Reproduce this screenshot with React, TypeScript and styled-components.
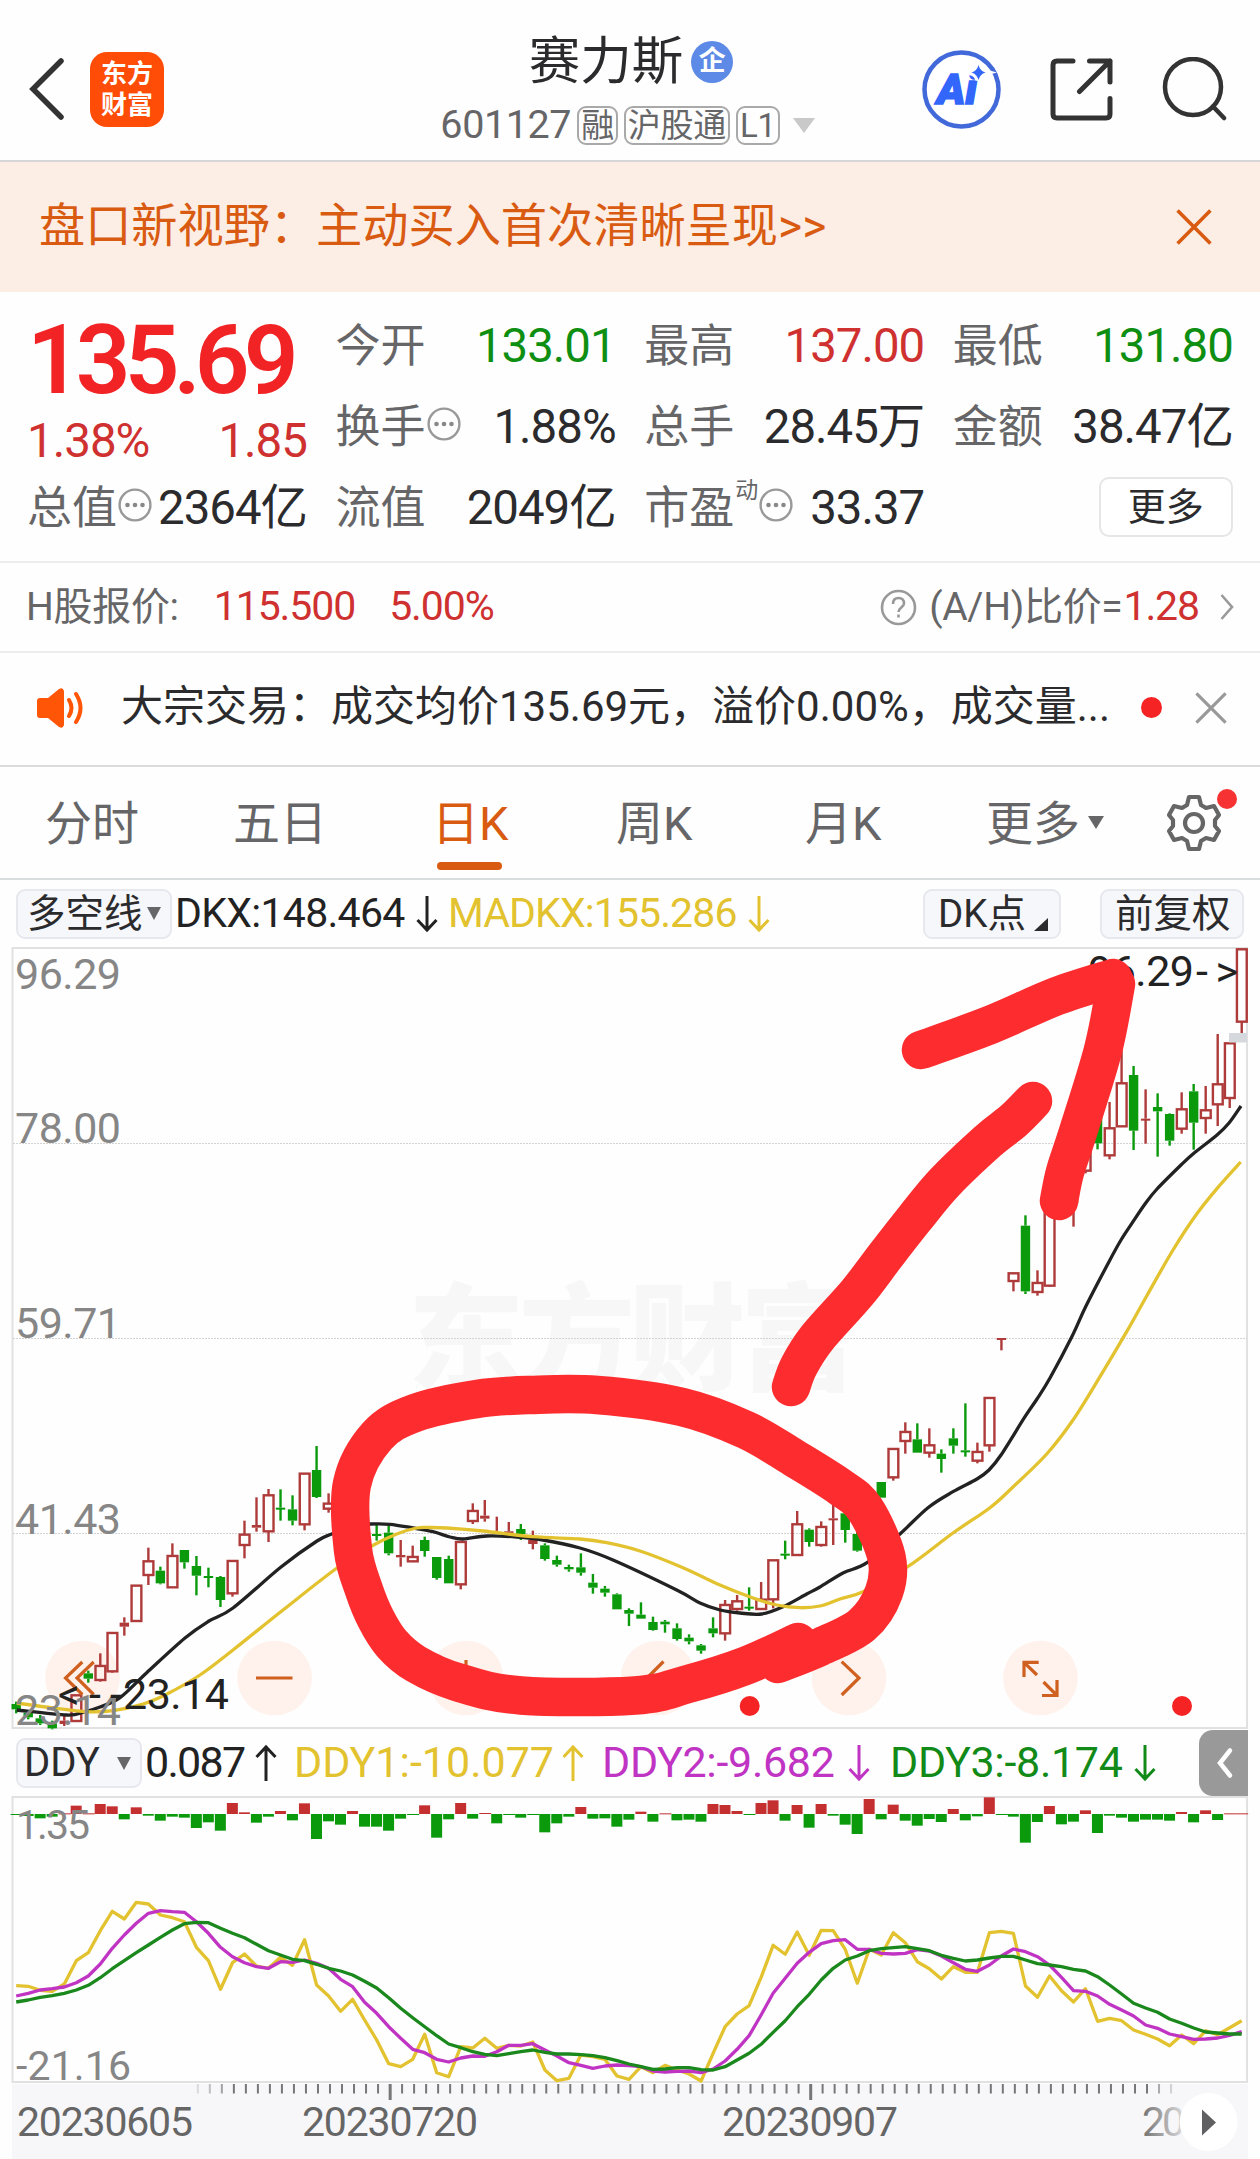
import React from "react";
import styled, { createGlobalStyle } from "styled-components";

const RED = "#cf3030";
const GREEN = "#0f8f12";
const YELLOW = "#e3c22f";
const MAGENTA = "#c034c4";
const ORANGE = "#d95b12";
const INK = "#2b2b2d";
const GREY = "#666668";
const FONT = `Roboto, "Noto Sans CJK SC", sans-serif`;

const Global = createGlobalStyle`
  * { box-sizing: border-box; }
  body { margin: 0; background: #fefefe; }
  svg { display: block; flex: none; }
`;

const Page = styled.main`
  width: 1260px;
  height: 2159px;
  overflow: hidden;
  background: #fefefe;
  color: ${INK};
  font-family: ${FONT};
  line-height: 1.2;
  white-space: nowrap;
`;

/* ---------- header ---------- */
const Header = styled.header`
  height: 162px;
  display: grid;
  grid-template-columns: 330px 1fr 330px;
  border-bottom: 2px solid #d6d6d6;
`;
const HeaderSide = styled.div<{ $end?: boolean }>`
  display: flex;
  align-items: center;
  justify-content: ${(p) => (p.$end ? "flex-end" : "flex-start")};
  gap: ${(p) => (p.$end ? 49 : 24)}px;
  padding: ${(p) => (p.$end ? "18px 33px 0 0" : "18px 0 0 29px")};
`;
const Logo = styled.div`
  width: 74px;
  height: 75px;
  border-radius: 17px;
  background: #ff4c06;
  color: #fff;
  font: 700 26px/31px ${FONT};
  text-align: center;
  padding-top: 7px;
`;
const HeaderTitle = styled.div`
  display: flex;
  flex-direction: column;
  align-items: center;
  padding-top: 32px;
  gap: 13px;
`;
const Name = styled.h1`
  margin: 0;
  display: flex;
  align-items: center;
  gap: 8px;
  font-size: 51.5px;
  font-weight: 400;
  line-height: 60px;
  padding-left: 2px;
`;
const Badge = styled.span`
  width: 42px;
  height: 42px;
  border-radius: 50%;
  background: #5c8ae6;
  color: #fff;
  font-size: 27px;
  font-weight: 700;
  line-height: 41px;
  text-align: center;
`;
const Code = styled.div`
  display: flex;
  align-items: center;
  height: 40px;
  font-size: 39.5px;
  letter-spacing: -0.4px;
  color: ${GREY};
  gap: 6px;
  margin-left: -5px;
`;
const Tag = styled.span`
  height: 39px;
  border: 2px solid #a9a9a9;
  border-radius: 9px;
  padding: 0 2px;
  font-size: 33px;
  line-height: 35px;
  letter-spacing: -0.3px;
`;

/* ---------- banner ---------- */
const Banner = styled.section`
  height: 130px;
  background: #fceee5;
  color: ${ORANGE};
  display: flex;
  align-items: center;
  justify-content: space-between;
  padding: 0 48px 0 39px;
  font-size: 46.2px;
`;

/* ---------- quote ---------- */
const Quote = styled.section`
  height: 271px;
  display: flex;
  gap: 28.6px;
  padding: 14px 26px 0 27px;
  border-bottom: 2px solid #ededed;
`;
const QuoteCol = styled.div`
  width: 280px;
  flex: none;
`;
const Price = styled.div`
  height: 108px;
  line-height: 108px;
  font-size: 96px;
  font-weight: 600;
  letter-spacing: -6px;
  color: #f22325;
`;
const Change = styled.div`
  height: 54px;
  display: flex;
  align-items: center;
  justify-content: space-between;
  font-size: 47.5px;
  letter-spacing: -1px;
  color: ${RED};
`;
const Cell = styled.div`
  height: 81px;
  display: flex;
  align-items: center;
`;
const Label = styled.span`
  font-size: 45px;
  color: ${GREY};
  margin-right: 1px;
`;
const Sup = styled.sup`
  font-size: 23px;
  line-height: 24px;
  align-self: flex-start;
  margin: 11px 1px 0 0;
  color: ${GREY};
`;
const Value = styled.span<{ $color?: string }>`
  margin-left: auto;
  font-size: 47.4px;
  letter-spacing: -1px;
  color: ${(p) => p.$color ?? INK};
`;
const MoreButton = styled.button`
  margin: -4px 0 0 auto;
  width: 134px;
  height: 60px;
  border: 2px solid #e6e6e8;
  border-radius: 10px;
  background: #fff;
  color: ${INK};
  font: 400 38px/54px ${FONT};
  padding: 0;
`;

/* ---------- H share and notice ---------- */
const HShare = styled.section`
  height: 90px;
  display: flex;
  align-items: center;
  padding: 0 26px 0 26px;
  border-bottom: 2px solid #ededed;
  font-size: 39px;
  letter-spacing: -0.3px;
  color: ${GREY};
`;
const Figure = styled.span<{ $left: number }>`
  margin-left: ${(p) => p.$left}px;
  font-size: 41px;
  letter-spacing: -1.1px;
  color: ${RED};
`;
const Ratio = styled.div`
  display: flex;
  align-items: center;
  margin-left: auto;
`;
const Notice = styled.section`
  height: 114px;
  display: flex;
  align-items: center;
  padding: 0 33px 3px 35px;
  border-bottom: 2px solid #dadcdc;
  font-size: 42px;
`;
const NoticeText = styled.span`
  margin-left: 35px;
`;
const Dot = styled.i`
  width: 21px;
  height: 21px;
  border-radius: 50%;
  background: #f52324;
  margin: 0 33px 0 auto;
`;

/* ---------- tabs ---------- */
const Tabs = styled.nav`
  height: 113px;
  display: flex;
  border-bottom: 2px solid #d8dcdc;
  padding-left: 45px;
  font-size: 47px;
  line-height: 114px;
  color: ${GREY};
`;
const Tab = styled.div<{ $width: number; $on?: boolean }>`
  width: ${(p) => p.$width}px;
  height: 111px;
  flex: none;
  display: flex;
  position: relative;
  color: ${(p) => (p.$on ? ORANGE : "inherit")};
`;
const Underline = styled.i`
  position: absolute;
  left: 5px;
  bottom: 8px;
  width: 65px;
  height: 8px;
  border-radius: 4px;
  background: ${ORANGE};
`;
const Caret = styled.i<{ $w: number; $h: number; $color: string }>`
  border-left: ${(p) => p.$w / 2}px solid transparent;
  border-right: ${(p) => p.$w / 2}px solid transparent;
  border-top: ${(p) => p.$h}px solid ${(p) => p.$color};
  align-self: center;
`;
const GearBox = styled.div`
  position: relative;
  height: 112px;
  display: flex;
  align-items: center;
`;
const GearDot = styled.i`
  position: absolute;
  top: 22px;
  right: -14px;
  width: 20px;
  height: 20px;
  border-radius: 50%;
  background: #f63332;
`;

/* ---------- indicator bars ---------- */
const IndicatorBar = styled.div<{ $height: number }>`
  height: ${(p) => p.$height}px;
  display: flex;
  align-items: center;
  padding: 0 16px;
  font-size: 41px;
`;
const Chip = styled.button<{ $width: number; $left?: string; $pad?: number }>`
  width: ${(p) => p.$width}px;
  height: 50px;
  flex: none;
  margin-left: ${(p) => p.$left ?? "0"};
  border: 2px solid #e6e8ee;
  border-radius: 9px;
  background: #f6f7fa;
  color: ${INK};
  font: 400 38.5px/44px ${FONT};
  padding: 0 0 0 ${(p) => p.$pad ?? 9}px;
  display: flex;
  align-items: center;
  gap: 4px;
`;
const ChipCorner = styled.i`
  border-left: 14px solid transparent;
  border-bottom: 13px solid ${INK};
  align-self: flex-end;
  margin: 0 0 6px 4px;
`;
const Reading = styled.span<{ $color: string; $width: number; $left: number; $track?: number; $size?: number }>`
  width: ${(p) => p.$width}px;
  flex: none;
  margin-left: ${(p) => p.$left}px;
  color: ${(p) => p.$color};
  font-size: ${(p) => p.$size ?? 41}px;
  letter-spacing: ${(p) => p.$track ?? -0.8}px;
  display: flex;
  align-items: center;
  justify-content: space-between;
`;
const SideHandle = styled.button`
  margin-left: auto;
  width: 49px;
  height: 66px;
  border: 0;
  border-radius: 14px 0 0 14px;
  background: #999;
  padding: 0 0 0 17px;
`;
const ChartSvg = styled.svg`
  font-family: ${FONT};
`;

/* ---------- chart data ---------- */
const X0 = 16.2;
const STEP = 12.015;
const xAt = (i: number) => X0 + STEP * i;

// [index, up, high, top, bottom, low], prices as thirds of a pixel below `base`
type Candle = [number, 0 | 1, number, number, number, number];
const groups: { base: number; rows: Candle[] }[] = [
  {
    base: 1400,
    rows: [
      [0, 0, 905, 912, 928, 940], [1, 0, 930, 938, 952, 958], [2, 0, 945, 955, 970, 975], [3, 0, 962, 970, 985, 988],
      [4, 1, 945, 962, 972, 978], [5, 1, 885, 885, 963, 963], [6, 0, 812, 820, 836, 848], [7, 1, 760, 797, 840, 845],
      [8, 1, 698, 698, 814, 818], [9, 1, 652, 668, 680, 707], [10, 1, 556, 556, 663, 663], [11, 1, 443, 483, 525, 555],
      [12, 0, 500, 512, 550, 553], [13, 1, 430, 467, 562, 562], [14, 0, 450, 450, 487, 506], [15, 0, 468, 498, 527, 586],
      [16, 0, 503, 528, 533, 562], [17, 0, 528, 531, 600, 621], [18, 1, 482, 482, 580, 590], [19, 1, 362, 403, 435, 475],
      [20, 1, 292, 375, 383, 395], [21, 1, 267, 285, 394, 426], [22, 0, 268, 323, 327, 362], [23, 0, 286, 328, 362, 376],
      [24, 1, 220, 220, 373, 391], [25, 0, 138, 210, 291, 294], [26, 1, 280, 310, 326, 338], [30, 0, 370, 402, 408, 422],
      [31, 0, 370, 398, 460, 466], [32, 1, 420, 465, 472, 500], [33, 1, 437, 470, 484, 484],
    ],
  },
  {
    base: 1440,
    rows: [
      [34, 0, 290, 300, 333, 350], [35, 0, 351, 351, 414, 419], [36, 0, 347, 357, 430, 430], [37, 1, 305, 305, 433, 448],
      [38, 1, 190, 212, 243, 252], [39, 1, 180, 227, 236, 245], [40, 1, 230, 276, 280, 282], [41, 1, 246, 274, 280, 282],
      [42, 0, 252, 267, 282, 300], [43, 1, 272, 300, 312, 328], [44, 0, 310, 316, 357, 362], [45, 0, 347, 360, 374, 380],
      [46, 0, 374, 381, 388, 395], [47, 0, 340, 382, 398, 407], [48, 0, 402, 428, 443, 461], [49, 0, 438, 446, 458, 470],
      [50, 0, 460, 463, 508, 508], [51, 0, 505, 510, 521, 558], [52, 0, 487, 524, 536, 536], [53, 0, 530, 546, 570, 572],
      [54, 0, 540, 545, 553, 578], [55, 0, 550, 565, 597, 602], [56, 0, 583, 593, 604, 613], [57, 0, 612, 616, 632, 641],
      [58, 0, 532, 565, 580, 592], [59, 1, 480, 494, 580, 602], [60, 1, 465, 483, 507, 512], [61, 0, 442, 500, 504, 512],
      [62, 1, 426, 478, 507, 507], [63, 1, 360, 360, 478, 505], [64, 0, 302, 341, 345, 358], [65, 1, 213, 252, 345, 345],
      [66, 0, 265, 269, 306, 320], [67, 1, 244, 260, 315, 320], [68, 1, 195, 235, 239, 315],
    ],
  },
  {
    base: 1280,
    rows: [
      [69, 0, 690, 700, 750, 788], [70, 0, 750, 762, 812, 815], [72, 0, 606, 606, 653, 653], [73, 1, 506, 506, 592, 602],
      [74, 1, 427, 455, 483, 521], [75, 0, 430, 478, 518, 518], [76, 1, 445, 495, 518, 533], [77, 0, 508, 521, 537, 578],
      [78, 0, 445, 475, 497, 521], [79, 0, 370, 511, 516, 530], [80, 1, 488, 515, 542, 550], [81, 1, 353, 353, 496, 515],
      [82, 1, 174, 174, 178, 211],
    ],
  },
  {
    base: 940,
    rows: [
      [83, 1, 999, 999, 1023, 1054], [84, 0, 826, 857, 1054, 1062], [85, 1, 991, 1028, 1056, 1067], [86, 1, 780, 780, 1037, 1040],
      [88, 1, 780, 780, 790, 860], [89, 1, 600, 600, 692, 700], [90, 0, 480, 500, 610, 628], [91, 1, 486, 564, 646, 658],
      [92, 1, 300, 429, 559, 559], [93, 0, 378, 405, 572, 630], [94, 1, 448, 536, 540, 611], [95, 0, 460, 501, 514, 650],
      [96, 0, 520, 522, 602, 617], [97, 1, 457, 507, 566, 581], [98, 0, 432, 454, 548, 629], [99, 1, 438, 510, 534, 581],
      [100, 1, 282, 432, 493, 558], [101, 1, 309, 309, 474, 504], [102, 1, 27, 27, 245, 280],
    ],
  },
];

const dkx: number[][] = [
  [16.7, 1710], [66.7, 1715], [84, 1712], [100, 1707], [120, 1697.7], [146.7, 1672.7], [185, 1638], [209, 1621], [233, 1608],
  [281, 1567], [317, 1541], [331.7, 1534], [352, 1526], [370.7, 1524], [390, 1524.3], [413, 1528], [433, 1531.7], [450, 1537],
  [463, 1539], [486.7, 1536], [516.7, 1537], [543, 1540], [580, 1548], [613, 1560], [676.7, 1590], [700, 1603], [720, 1610],
  [740, 1613], [761.7, 1614], [783, 1606.7], [806.7, 1594], [820, 1587], [843, 1573], [867, 1562.7], [900, 1534],
  [928, 1507.7], [953, 1491.7], [977, 1479], [989, 1470], [1001, 1455], [1025, 1416.7], [1037, 1399], [1050, 1378],
  [1071.7, 1337], [1086, 1306], [1109, 1261.7], [1121, 1240], [1133, 1221.7], [1145, 1204], [1157, 1189], [1181, 1165],
  [1193, 1154], [1217, 1135], [1229, 1123], [1241, 1106],
];
const madkx: number[][] = [
  [16.7, 1703], [53, 1708], [87, 1711.7], [113, 1710.7], [143, 1704], [167, 1694], [200, 1675], [233, 1650], [283, 1610],
  [337, 1568], [371.7, 1546], [396.7, 1534], [416.7, 1528], [430, 1527.5], [446.7, 1528], [483, 1531], [533, 1536.7], [580, 1539],
  [606.7, 1542.7], [640, 1551], [683, 1567.7], [720, 1585], [753, 1598], [776.7, 1605], [800, 1607.7], [820, 1606],
  [840, 1599], [863, 1591.7], [907.7, 1566.7], [953, 1533], [990, 1507.7], [1013, 1487], [1046.7, 1454], [1073, 1420],
  [1100, 1376.7], [1126.7, 1331.7], [1146.7, 1296], [1173, 1250], [1196.7, 1214], [1220, 1185], [1240.7, 1162],
];

const bars = [
  -1, -6, -13, -8, 2, 25, 2, 30, 23, -16, 20, -5, -20, -8, -11, -42, -25, -50, 33, 5, -26, -8, 9, -19, 32, -75, -22, -32, 9,
  -38, -38, -50, -14, -2, 26, -71, -16, 33, -14, 3, -28, -2, -11, -2, -55, -28, -8, 21, -14, -13, -38, -17, 7, -23, 2, -19,
  -17, -23, 30, 27, 9, -1, 33, 41, -20, 27, -41, 30, -5, -32, -60, 45, -16, 28, -20, -35, -15, -24, 15, -19, -7, 50, -2, -8,
  -86, -24, 24, -31, -23, 11, -57, -5, -11, -23, -17, -17, -20, 6, -25, 11, -18, 2, 2,
];
const ddy1 = [
  797, 799, 811, 814, 792, 722, 698, 632, 574, 597, 547, 552, 585, 593, 605, 682, 722, 808, 728, 702, 738, 745, 712, 736, 659,
  795, 828, 874, 838, 900, 960, 1031, 1040, 1018, 943, 1058, 1070, 980, 984, 955, 985, 976, 978, 966, 1050, 1082, 1075, 1005,
  1010, 1018, 1068, 1078, 1040, 1058, 1036, 1050, 1062, 1083, 1000, 920, 882, 857, 772, 676, 703, 636, 706, 631, 632, 688,
  790, 688, 705, 638, 668, 725, 746, 777, 740, 757, 757, 638, 634, 640, 798, 832, 768, 812, 846, 806, 904, 895, 902, 930, 943,
  957, 977, 945, 971, 932, 944, 923, 902,
];
const ddy2 = [
  828, 820, 810, 806, 801, 788, 768, 732, 685, 645, 610, 580, 572, 575, 577, 605, 640, 682, 710, 728, 740, 745, 725, 727, 720,
  730, 745, 778, 800, 847, 880, 920, 955, 988, 998, 1018, 1026, 1014, 1008, 1009, 995, 976, 976, 971, 990, 1008, 1028, 1036,
  1045, 1038, 1035, 1037, 1040, 1053, 1056, 1054, 1053, 1058, 1047, 1023, 988, 947, 885, 820, 775, 730, 697, 671, 662, 659,
  688, 688, 700, 702, 700, 689, 693, 708, 728, 748, 754, 735, 708, 687, 695, 710, 735, 772, 812, 814, 828, 853, 870, 888, 915,
  925, 942, 950, 958, 957, 954, 946, 935,
];
const ddy3 = [
  846, 840, 832, 827, 820, 810, 796, 773, 746, 722, 698, 675, 652, 630, 611, 607, 608, 625, 640, 653, 673, 692, 705, 718, 722,
  733, 745, 753, 765, 784, 804, 833, 865, 893, 920, 947, 972, 983, 995, 1003, 1007, 1001, 995, 990, 997, 1002, 1002, 1004,
  1007, 1013, 1022, 1032, 1040, 1048, 1047, 1043, 1043, 1049, 1050, 1040, 1020, 1000, 973, 937, 902, 860, 823, 780, 745, 720,
  708, 692, 686, 683, 680, 686, 692, 706, 715, 723, 720, 714, 709, 709, 720, 731, 735, 740, 748, 753, 770, 795, 822, 850, 864,
  877, 897, 910, 924, 936, 939, 942, 942,
];

const smooth = (pts: number[][]) => {
  let d = `M${pts[0][0]} ${pts[0][1]}`;
  for (let i = 0; i < pts.length - 1; i++) {
    const a = pts[Math.max(i - 1, 0)];
    const b = pts[i];
    const c = pts[i + 1];
    const e = pts[Math.min(i + 2, pts.length - 1)];
    d += `C${b[0] + (c[0] - a[0]) / 6} ${b[1] + (c[1] - a[1]) / 6} ${c[0] - (e[0] - b[0]) / 6} ${c[1] - (e[1] - b[1]) / 6} ${c[0]} ${c[1]}`;
  }
  return d;
};
const series = (values: number[]) => values.map((v, i) => `${xAt(i).toFixed(1)},${(1720 + v / 3).toFixed(1)}`).join(" ");

const ovalPoints = [
  [778, 1664], [820, 1647], [862, 1625], [884, 1592], [886.5, 1557], [865, 1509], [840, 1487], [794, 1458], [746, 1430], [682, 1407],
  [597, 1395], [530, 1395], [477, 1399], [415, 1413], [377, 1436], [352, 1484], [353, 1550], [364, 1590], [376, 1619], [392, 1644],
  [416, 1664], [457, 1682], [521, 1695.5], [635, 1695.5], [688, 1684], [745, 1666], [798, 1642],
];
const shaftPoints = [
  [791, 1387], [799, 1366], [817, 1338], [857, 1293], [886, 1255], [915, 1218], [945, 1182], [988, 1141], [1013, 1121], [1033, 1101],
];
const headLeft = [[921, 1050], [990, 1025], [1057, 996], [1113, 978]];
const headDown = [[1116, 984], [1103, 1050], [1078, 1132], [1065, 1172], [1059, 1201]];

/* ---------- pieces ---------- */
const Cross = ({ size, color }: { size: number; color: string }) => (
  <svg width={size} height={size} viewBox="0 0 34 34" stroke={color} strokeWidth="3.4">
    <path d="M1.5 1.5 32.5 32.5M32.5 1.5 1.5 32.5" />
  </svg>
);
const EllipsisSvg = styled.svg`
  margin-top: -7px;
`;
const Ellipsis = () => (
  <EllipsisSvg width="34" height="34" viewBox="0 0 34 34">
    <circle cx="17" cy="17" r="15.4" fill="none" stroke="#999" strokeWidth="2.4" />
    {[9.5, 17, 24.5].map((x) => (
      <circle key={x} cx={x} cy="17" r="2.3" fill="#888" />
    ))}
  </EllipsisSvg>
);
const Arrow = ({ up }: { up?: boolean }) => (
  <svg width="22" height="38" viewBox="0 0 22 38" fill="none" stroke="currentColor" strokeWidth="3">
    <path d={up ? "M11 37V2M1.5 13 11 3l9.5 10" : "M11 1v35M1.5 25 11 35l9.5-10"} />
  </svg>
);

const CandleMark = ({ base, row }: { base: number; row: Candle }) => {
  const [i, up, h, t, b, l] = row;
  const y = (v: number) => base + v / 3;
  const x = xAt(i);
  const thin = b - t < 14;
  const color = up ? "#ae3a3a" : "#0a9a0c";
  return (
    <g stroke={color} strokeWidth="2.4">
      {h < t && <path d={`M${x} ${y(h)}V${y(t)}`} />}
      {l > b && <path d={`M${x} ${y(b)}V${y(l)}`} />}
      {up && !thin ? (
        <rect x={x - 4.8} y={y(t) + 0.3} width="9.8" height={y(b) - y(t) - 0.3} fill="none" />
      ) : (
        <rect x={x - 4.7} y={y(t)} width="9.4" height={Math.max(y(b) - y(t), 2)} fill={color} stroke="none" />
      )}
    </g>
  );
};

const MainChart = () => (
  <ChartSvg width="1260" height="783" viewBox="0 947 1260 783">
    <text x="408" y="1381" textLength="448" fontSize="116" fontWeight="900" fill="#f7f7f7">东方财富</text>
    <rect x="12.5" y="948" width="1234.5" height="780" fill="none" stroke="#e1e1e1" strokeWidth="2" />
    <path d="M13 1143.5H1247M13 1338.5H1247M13 1533.5H1247" stroke="#d3d3d3" strokeWidth="1" strokeDasharray="2 1" />
    {[82.5, 274.6, 466, 658, 849, 1040.5].map((x) => (
      <circle key={x} cx={x} cy="1678" r="37.3" fill="#fff1eb" />
    ))}
    {groups.map((g) => g.rows.map((row) => <CandleMark key={row[0]} base={g.base} row={row} />))}
    <path d={smooth(dkx)} fill="none" stroke="#222" strokeWidth="3.3" />
    <path d={smooth(madkx)} fill="none" stroke={YELLOW} strokeWidth="3.3" />
    <rect x="1229" y="1033" width="18" height="9.5" fill="#d5d8dc" />
    <g fill="none" stroke="#cf6020" strokeWidth="3.2">
      <path d="M82.3 1662 65.5 1678 82.3 1694.5M93.7 1662 77 1678 93.7 1694.5M256 1678H292.5M448 1678H484M466 1660V1696M663.5 1661.5 647 1678 663.5 1694.5M841.7 1661.7 859 1678 841.7 1695" />
      <path d="M1024 1677V1662.4H1038.7M1024 1662.4 1037 1675M1042 1695.5H1057V1680M1057 1695.5 1043.5 1682" />
    </g>
    <circle cx="749.7" cy="1706" r="10" fill="#f52324" />
    <circle cx="1182" cy="1706" r="10" fill="#f52324" />
    <g fontSize="43" fill="#868686">
      <text x="15" y="989" textLength="106">96.29</text>
      <text x="15" y="1143" textLength="106">78.00</text>
      <text x="15" y="1338" textLength="106">59.71</text>
      <text x="15" y="1533.5" textLength="106">41.43</text>
      <text x="15" y="1724.5" textLength="106">23.14</text>
    </g>
    <g fontSize="43" fill="#222">
      <text y="1709">
        <tspan x="58" textLength="64">&lt;--</tspan>
        <tspan x="123" textLength="106">23.14</tspan>
      </text>
      <text y="986">
        <tspan x="1088" textLength="106">96.29</tspan>
        <tspan x="1196" textLength="42">-&gt;</tspan>
      </text>
    </g>
    <g fill="none" stroke="#fd2c2f" strokeWidth="38.5" strokeLinecap="round" strokeLinejoin="round">
      <path d={smooth(ovalPoints)} />
      <path d={smooth(shaftPoints)} />
      <path d={smooth(headLeft)} />
      <path d={smooth(headDown)} />
    </g>
  </ChartSvg>
);

const DdyChart = () => (
  <ChartSvg width="1260" height="288" viewBox="0 1796 1260 288">
    <rect x="12.5" y="1797" width="1234.5" height="285" fill="none" stroke="#e1e1e1" strokeWidth="2" />
    {bars.map((v, i) => (
      <rect
        key={i}
        x={xAt(i) - 5.6}
        y={v > 0 ? 1814 - v / 3 : 1814}
        width={Math.abs(v) < 4 ? 12 : 11}
        height={Math.max(Math.abs(v) / 3, 1)}
        fill={v > 0 ? "#c42f30" : "#0a9a0c"}
      />
    ))}
    <g fontSize="41" fill="#868686">
      <text x="16" y="1839" textLength="74">1.35</text>
      <text x="16" y="2079.5" textLength="115">-21.16</text>
    </g>
    <g fill="none" strokeWidth="3.3" strokeLinejoin="round">
      <polyline points={series(ddy1)} stroke={YELLOW} />
      <polyline points={series(ddy2)} stroke={MAGENTA} />
      <polyline points={series(ddy3)} stroke="#1a881c" />
    </g>
  </ChartSvg>
);

const tickOpacity = (i: number) => (i < 18 ? (i - 14) * 0.22 : i > 94 ? (97 - i) * 0.3 : 1);

const TimeAxis = () => (
  <ChartSvg width="1260" height="75" viewBox="0 2084 1260 75">
    <defs>
      <linearGradient id="fade" x1="1144" x2="1188" y1="0" y2="0" gradientUnits="userSpaceOnUse">
        <stop offset="0" stopColor="#777" />
        <stop offset="1" stopColor="#e4e4e6" />
      </linearGradient>
    </defs>
    <rect x="12" y="2084" width="1236" height="75" fill="#f7f7fa" />
    {Array.from({ length: 82 }, (_, k) => k + 15).map((i) => {
      const major = i === 31 || i === 66;
      return (
        <rect
          key={i}
          x={xAt(i) + (major ? 0 : 0.4)}
          y="2084"
          width={major ? 3 : 2}
          height={major ? 16 : 9.5}
          fill="#777"
          opacity={tickOpacity(i)}
        />
      );
    })}
    <g fontSize="41" fill="#666">
      <text x="17" y="2136" textLength="176">20230605</text>
      <text x="302" y="2136" textLength="176">20230720</text>
      <text x="722" y="2136" textLength="176">20230907</text>
      <text x="1142" y="2136" textLength="43" fill="url(#fade)">20</text>
    </g>
    <circle cx="1208.6" cy="2122" r="29" fill="#fff" />
    <path d="M1202 2109.5 1216 2122.5 1202 2135.5Z" fill="#606062" />
  </ChartSvg>
);

export default function App() {
  return (
    <Page>
      <Global />
      <Header>
        <HeaderSide>
          <svg width="37" height="62" viewBox="0 0 37 62" fill="none" stroke="#333" strokeWidth="5.5">
            <path d="M32 3 4 31l28 28" strokeLinecap="round" />
          </svg>
          <Logo>东方<br />财富</Logo>
        </HeaderSide>
        <HeaderTitle>
          <Name>赛力斯<Badge>企</Badge></Name>
          <Code>
            601127
            <Tag>融</Tag>
            <Tag>沪股通</Tag>
            <Tag>L1</Tag>
            <Caret $w={23} $h={15} $color="#c9c9c9" style={{ marginLeft: 7 }} />
          </Code>
        </HeaderTitle>
        <HeaderSide $end>
          <svg width="79" height="79" viewBox="0 0 79 79">
            <circle cx="39.5" cy="39.5" r="37" fill="#fff" stroke="#4169d9" strokeWidth="4.5" />
            <text x="15" y="54" fontSize="43" fontWeight="900" fontStyle="italic" fill="#3366fa" stroke="#3366fa" strokeWidth="1.6">
              Ai
            </text>
            <path d="M56.500 15q1.500 6 7 7.500-5.500 1.500-7 7.500-1.500-6-7-7.500 5.500-1.500 7-7.500z" fill="#3366fa" stroke="#fff" strokeWidth="6" paintOrder="stroke" />
          </svg>
          <svg width="63" height="63" viewBox="0 0 63 63" fill="none" stroke="#333" strokeWidth="5" strokeLinecap="round" strokeLinejoin="round">
            <path d="M23 3H7Q3 3 3 7V56Q3 60 7 60H56Q60 60 60 56V40.500M39.500 3H60V24M60 3 29.500 33.500" />
          </svg>
          <svg width="65" height="65" viewBox="0 0 65 65" fill="none" stroke="#333" strokeWidth="4.500" strokeLinecap="round">
            <circle cx="31" cy="30" r="28" />
            <path d="M51 49.500 62 61" />
          </svg>
        </HeaderSide>
      </Header>

      <Banner>
        <span>盘口新视野：主动买入首次清晰呈现&gt;&gt;</span>
        <Cross size={36} color={ORANGE} />
      </Banner>

      <Quote>
        <QuoteCol>
          <Price>135.69</Price>
          <Change><span>1.38%</span><span>1.85</span></Change>
          <Cell><Label>总值</Label><Ellipsis /><Value>2364亿</Value></Cell>
        </QuoteCol>
        <QuoteCol>
          <Cell><Label>今开</Label><Value $color={GREEN}>133.01</Value></Cell>
          <Cell><Label>换手</Label><Ellipsis /><Value>1.88%</Value></Cell>
          <Cell><Label>流值</Label><Value>2049亿</Value></Cell>
        </QuoteCol>
        <QuoteCol>
          <Cell><Label>最高</Label><Value $color={RED}>137.00</Value></Cell>
          <Cell><Label>总手</Label><Value>28.45万</Value></Cell>
          <Cell><Label>市盈</Label><Sup>动</Sup><Ellipsis /><Value>33.37</Value></Cell>
        </QuoteCol>
        <QuoteCol>
          <Cell><Label>最低</Label><Value $color={GREEN}>131.80</Value></Cell>
          <Cell><Label>金额</Label><Value>38.47亿</Value></Cell>
          <Cell><MoreButton>更多</MoreButton></Cell>
        </QuoteCol>
      </Quote>

      <HShare>
        <span>H股报价:</span>
        <Figure $left={35}>115.500</Figure>
        <Figure $left={34}>5.00%</Figure>
        <Ratio>
          <svg width="37" height="37" viewBox="0 0 37 37" fill="none" stroke="#999" strokeWidth="2.600" style={{ marginRight: 12 }}>
            <circle cx="18.500" cy="18.500" r="16.500" />
            <path d="M13 15q0-6 5.500-6t5.500 5.500c0 3.500-5.500 4-5.500 8.500M18.500 25.500v3" />
          </svg>
          <span>(A/H)比价=</span>
          <Figure $left={1}>1.28</Figure>
          <svg width="14" height="28" viewBox="0 0 14 28" fill="none" stroke="#999" strokeWidth="2.600" style={{ marginLeft: 21 }}>
            <path d="M1.500 2 12 14 1.500 26" />
          </svg>
        </Ratio>
      </HShare>

      <Notice>
        <svg width="51" height="42" viewBox="0 0 51 42">
          <path d="M5 11h8L24 2q4-2 5 2v34q-1 4-5 2l-11-9H5q-3 0-3-3V14q0-3 3-3z" fill="#ff5507" />
          <path d="M34 13q5 8 0 16M41 7q9 14 0 28" fill="none" stroke="#ff5507" strokeWidth="4" strokeLinecap="round" />
        </svg>
        <NoticeText>大宗交易：成交均价135.69元，溢价0.00%，成交量...</NoticeText>
        <Dot />
        <Cross size={32} color="#999" />
      </Notice>

      <Tabs>
        <Tab $width={188}>分时</Tab>
        <Tab $width={199}>五日</Tab>
        <Tab $width={184} $on>日K<Underline /></Tab>
        <Tab $width={189}>周K</Tab>
        <Tab $width={181}>月K</Tab>
        <Tab $width={179}>更多<Caret $w={17} $h={13} $color={GREY} style={{ marginLeft: 8 }} /></Tab>
        <GearBox>
          <svg width="58" height="58" viewBox="0 0 58 58" fill="none" stroke="#666" strokeWidth="4.200" strokeLinejoin="round">
            <path d="M24 3h10l2 8 5 3 8-2 5 9-4 5v6l4 5-5 9-8-2-5 3-2 8H24l-2-8-5-3-8 2-5-9 4-5v-6l-4-5 5-9 8 2 5-3z" />
            <circle cx="29" cy="29" r="9" />
          </svg>
          <GearDot />
        </GearBox>
      </Tabs>

      <IndicatorBar $height={67}>
        <Chip $width={156}>多空线<Caret $w={15} $h={13} $color={GREY} /></Chip>
        <Reading $color="#222" $width={263} $left={3} $track={-0.700}>DKX:148.464<Arrow /></Reading>
        <Reading $color={YELLOW} $width={322} $left={10} $track={-0.900}>MADKX:155.286<Arrow /></Reading>
        <Chip $width={138} $left="auto" $pad={13}>DK点<ChipCorner /></Chip>
        <Chip $width={144} $left="39px" $pad={13}>前复权</Chip>
      </IndicatorBar>

      <MainChart />

      <IndicatorBar $height={66} style={{ paddingRight: 12 }}>
        <Chip $width={126} $pad={6} style={{ gap: 17, fontSize: 40 }}>DDY<Caret $w={15} $h={13} $color={GREY} /></Chip>
        <Reading $color="#222" $width={132} $left={3} $size={43} $track={-1.700}>0.087<Arrow up /></Reading>
        <Reading $color={YELLOW} $width={290} $left={17} $size={43} $track={0}>DDY1:-10.077<Arrow up /></Reading>
        <Reading $color={MAGENTA} $width={268} $left={18} $size={43} $track={-0.300}>DDY2:-9.682<Arrow /></Reading>
        <Reading $color="#128a18" $width={266} $left={20} $size={43} $track={-0.300}>DDY3:-8.174<Arrow /></Reading>
        <SideHandle>
          <svg width="18" height="32" viewBox="0 0 18 32" fill="none" stroke="#fff" strokeWidth="4.500" strokeLinecap="round">
            <path d="M14 3.500 4 16l10 12.500" />
          </svg>
        </SideHandle>
      </IndicatorBar>

      <DdyChart />
      <TimeAxis />
    </Page>
  );
}
